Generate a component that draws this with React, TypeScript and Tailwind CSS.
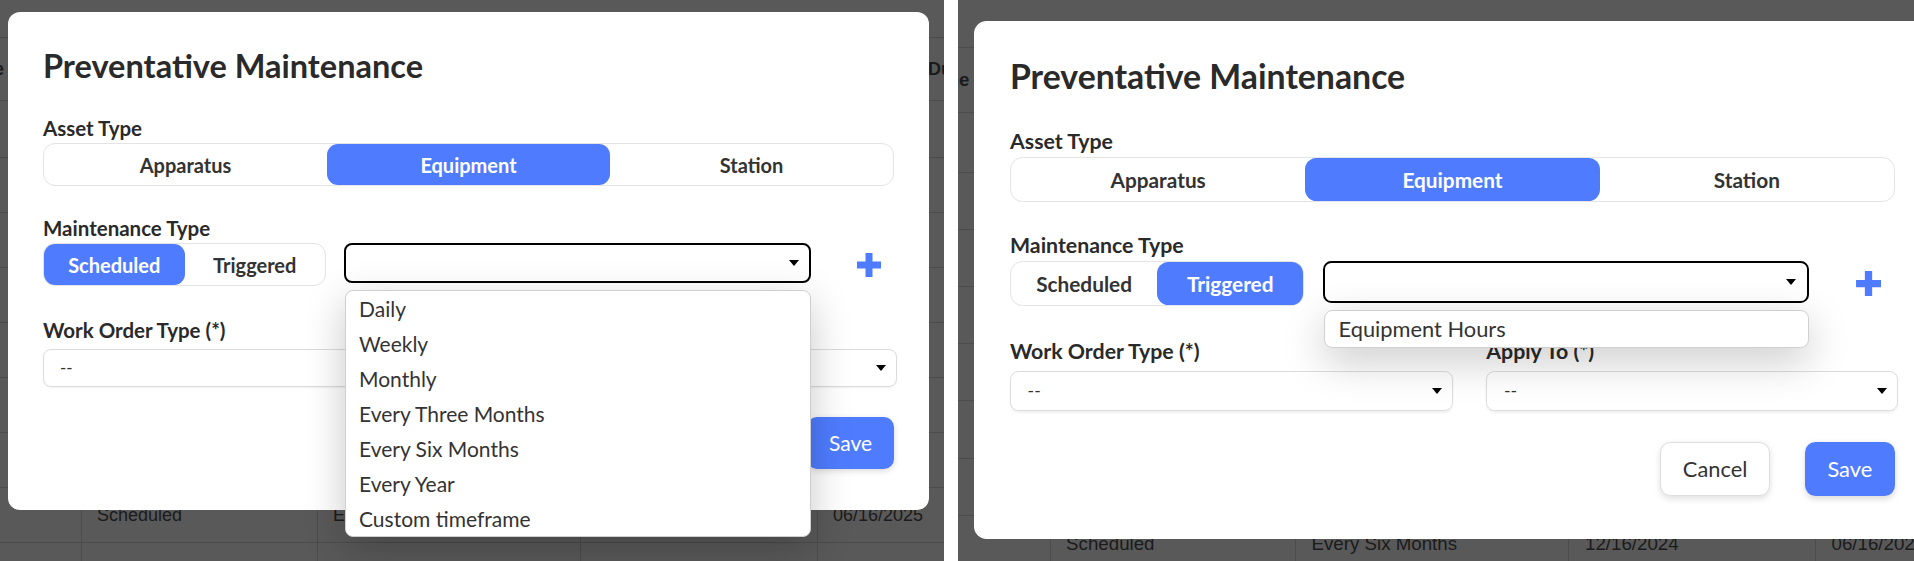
import React from "react";

// ─── Backdrop table (mostly hidden under the modal) ──────────────────────────
const COLS = ["w-[141px]", "w-[236px]", "w-[263px]", "w-[237px]", "w-[320px]"];
const HEAD = ["Name", "", "", "", "Scheduled Due"];
const ROW = ["", "Scheduled", "Every Six Months", "12/16/2024", "06/16/2025"];
const EMPTY = ["", "", "", "", ""];

function BackdropTable() {
  return (
    <div className="-ml-[60px] font-['Liberation_Sans',Arial,sans-serif] text-[18px] text-[#1b1b1b]">
      <div className="h-[37px]" />
      <div className="flex h-[63px] items-center border-t border-[#4c4c4c] font-bold">
        {HEAD.map((h, i) => (
          <div key={i} className={`${COLS[i]} shrink-0 whitespace-nowrap px-[15px]`}>
            {h}
          </div>
        ))}
      </div>
      {[57, 55, 55, 55, 55, 55, 55, 55, 55].map((h, r) => (
        <div
          key={r}
          className={`flex border-t border-[#4c4c4c] ${h === 57 ? "h-[57px]" : "h-[55px]"}`}
        >
          {(r === 7 ? ROW : EMPTY).map((c, i) => (
            <div
              key={i}
              className={`${COLS[i]} flex shrink-0 items-center whitespace-nowrap px-[15px] ${i > 0 ? "border-l border-[#4c4c4c]" : ""}`}
            >
              {c}
            </div>
          ))}
        </div>
      ))}
    </div>
  );
}

// ─── Small pieces ─────────────────────────────────────────────────────────────
function Caret() {
  return <span className="h-0 w-0 border-x-[5px] border-t-[6px] border-x-transparent border-t-black" />;
}

function Segmented({ options, active }: { options: string[]; active: string }) {
  return (
    <div className="flex h-[43px] w-full rounded-[12px] border border-[#e4e4e4] bg-white">
      {options.map((o) => (
        <div
          key={o}
          className={`flex flex-1 items-center justify-center text-[20px] font-bold ${
            o === active ? "rounded-[11px] bg-[#4f7cff] text-white" : "text-[#333]"
          }`}
        >
          {o}
        </div>
      ))}
    </div>
  );
}

function GraySelect() {
  return (
    <div className="mt-[7px] flex h-[38px] items-center justify-between rounded-[8px] border border-[#dcdcdc] pl-[16px] pr-[10px] text-[17px] text-[#333] shadow-[0_1px_2px_rgba(0,0,0,0.06)]">
      <span>--</span>
      <Caret />
    </div>
  );
}

function PlusIcon() {
  return (
    <svg className="ml-[45px] mt-[9px] h-[26px] w-[26px] shrink-0" viewBox="0 0 26 26" aria-hidden="true">
      <path d="M13 1v24M1 13h24" stroke="#4f7cff" strokeWidth={7} strokeLinecap="butt" fill="none" />
    </svg>
  );
}

// ─── Modal scene ──────────────────────────────────────────────────────────────
function Scene({ mode, items }: { mode: string; items: string[] }) {
  return (
    <div className="relative h-[561px] w-[944px]">
      <BackdropTable />

      <div className="absolute left-[8px] top-[12px] h-[498px] w-[921px] rounded-[12px] bg-white px-[35px] pt-[35px] font-['Lato',sans-serif] text-[#2a2a2a]">
        <h2 className="text-[32.5px] font-bold leading-[38px]">Preventative Maintenance</h2>

        <div className="mt-[31px] text-[20.5px] font-bold leading-[24px]">Asset Type</div>
        <div className="mt-[3px]">
          <Segmented options={["Apparatus", "Equipment", "Station"]} active="Equipment" />
        </div>

        <div className="mt-[30px] text-[20.5px] font-bold leading-[24px]">Maintenance Type</div>
        <div className="mt-[3px] flex items-start">
          <div className="w-[283px] shrink-0">
            <Segmented options={["Scheduled", "Triggered"]} active={mode} />
          </div>

          <div className="relative ml-[18px] w-[467px] shrink-0">
            <div className="flex h-[40px] items-center justify-end rounded-[8px] border-2 border-black pr-[10px]">
              <Caret />
            </div>
            {/* open dropdown list */}
            <div className="absolute left-[1px] right-0 top-[47px] z-10 rounded-[8px] border border-[#cfcfcf] bg-white shadow-[0_12px_40px_rgba(0,0,0,0.22)]">
              {items.map((it) => (
                <div key={it} className="flex h-[35px] items-center px-[13px] text-[21px] text-[#333]">
                  {it}
                </div>
              ))}
            </div>
          </div>

          <PlusIcon />
        </div>

        <div className="mt-[32px] flex">
          <div className="w-[426px] shrink-0">
            <div className="text-[20.5px] font-bold leading-[24px]">Work Order Type (*)</div>
            <GraySelect />
          </div>
          <div className="ml-[32px] w-[396px] shrink-0">
            <div className="text-[20.5px] font-bold leading-[24px]">Apply To (*)</div>
            <GraySelect />
          </div>
        </div>

        <div className="mt-[30px] flex justify-end gap-[33px]">
          <button className="h-[52px] w-[106px] rounded-[10px] border border-[#dedede] bg-white text-[21px] text-[#333] shadow-[0_2px_6px_rgba(0,0,0,0.12)]">
            Cancel
          </button>
          <button className="h-[52px] w-[87px] rounded-[10px] bg-[#4f7cff] text-[21px] text-white shadow-[0_2px_6px_rgba(0,0,0,0.15)]">
            Save
          </button>
        </div>
      </div>
    </div>
  );
}

export default function App() {
  return (
    <div className="flex h-[561px] w-[1914px] overflow-hidden bg-white">
      <div className="h-[561px] w-[944px] shrink-0 overflow-hidden bg-[#595959]">
        <Scene
          mode="Scheduled"
          items={[
            "Daily",
            "Weekly",
            "Monthly",
            "Every Three Months",
            "Every Six Months",
            "Every Year",
            "Custom timeframe",
          ]}
        />
      </div>
      <div className="ml-[14px] h-[561px] w-[956px] shrink-0 overflow-hidden bg-[#595959]">
        <div className="pl-[7px] pt-[8px] [zoom:1.04]">
          <Scene mode="Triggered" items={["Equipment Hours"]} />
        </div>
      </div>
    </div>
  );
}
